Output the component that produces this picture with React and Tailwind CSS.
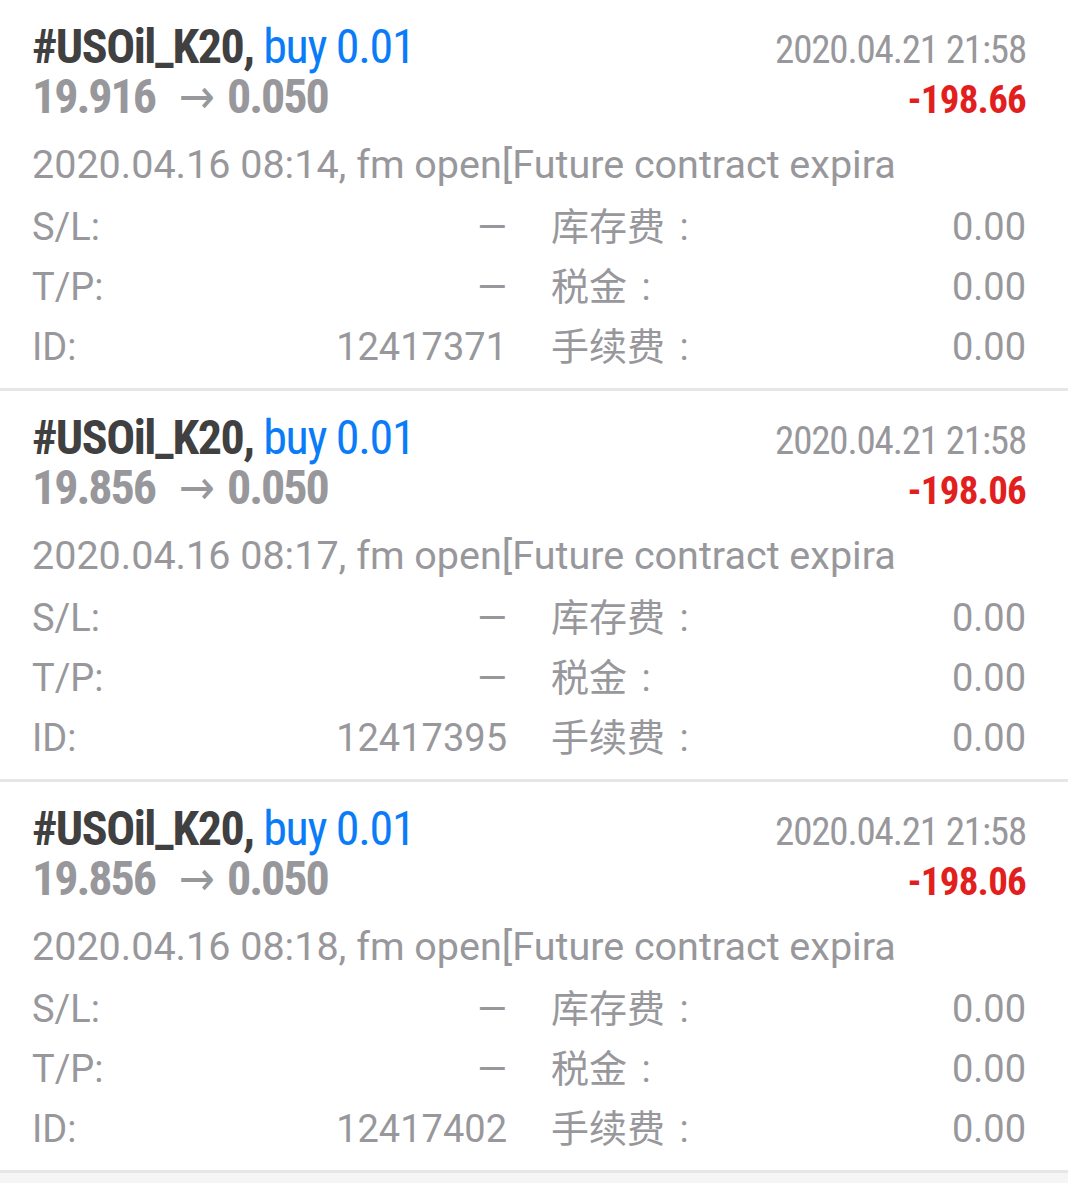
import React from "react";

const trades = [
  { open: "19.916", pl: "-198.66", time: "2020.04.16 08:14", id: "12417371" },
  { open: "19.856", pl: "-198.06", time: "2020.04.16 08:17", id: "12417395" },
  { open: "19.856", pl: "-198.06", time: "2020.04.16 08:18", id: "12417402" },
];

const cond = {
  fontFamily: '"Roboto Condensed", "Liberation Sans Narrow", "DejaVu Sans Condensed", Roboto, sans-serif',
};
const regular = {
  fontFamily: 'Roboto, "Noto Sans CJK SC", sans-serif',
};

// CJK label with the full-width colon centred in its own cell
const CnLabel = ({ text }) => (
  <span>
    {text}
    <span className="inline-block w-[1em] text-center">:</span>
  </span>
);

const TradeCard = ({ trade }) => {
  return (
    <div className="bg-white border-b-[3px] border-[#e6e6e6] pl-8 pr-[42px] pt-[22px] pb-[11px]">
      <div className="flex justify-between items-baseline" style={cond}>
        <div className="text-[48px] leading-[50px]">
          <span className="font-bold tracking-[-0.031em] text-[#404040]">#USOil_K20,</span>
          <span className="tracking-[-0.027em] text-[#0a7cf7]"> buy 0.01</span>
        </div>
        <div className="text-[39px] leading-none tracking-[-0.03em] text-[#98989c]">
          2020.04.21 21:58
        </div>
      </div>
      <div className="flex justify-between items-baseline" style={cond}>
        <div className="text-[48px] leading-[50px] font-bold tracking-[-0.043em] text-[#98989c]">
          {trade.open}
          <span className="ml-[24px] mr-[14px] font-normal">→</span>
          0.050
        </div>
        <div className="text-[39px] leading-none font-bold tracking-[-0.02em] text-[#e21f1f]">
          {trade.pl}
        </div>
      </div>
      <div
        className="mt-[20px] text-[39.5px] leading-[45px] text-[#98989c] whitespace-nowrap"
        style={regular}
      >
        {trade.time}, fm open[Future contract expira
      </div>
      <div
        className="mt-[10px] grid grid-cols-2 gap-x-[44px] text-[38px] leading-[60px] text-[#98989c]"
        style={regular}
      >
        <div className="flex justify-between">
          <span>S/L:</span>
          <span>—</span>
        </div>
        <div className="flex justify-between">
          <CnLabel text="库存费" />
          <span>0.00</span>
        </div>
        <div className="flex justify-between">
          <span>T/P:</span>
          <span>—</span>
        </div>
        <div className="flex justify-between">
          <CnLabel text="税金" />
          <span>0.00</span>
        </div>
        <div className="flex justify-between">
          <span>ID:</span>
          <span>{trade.id}</span>
        </div>
        <div className="flex justify-between">
          <CnLabel text="手续费" />
          <span>0.00</span>
        </div>
      </div>
    </div>
  );
};

export default function App() {
  return (
    <div className="min-h-screen bg-[#f5f5f5]">
      {trades.map((t) => (
        <TradeCard key={t.id} trade={t} />
      ))}
    </div>
  );
}
